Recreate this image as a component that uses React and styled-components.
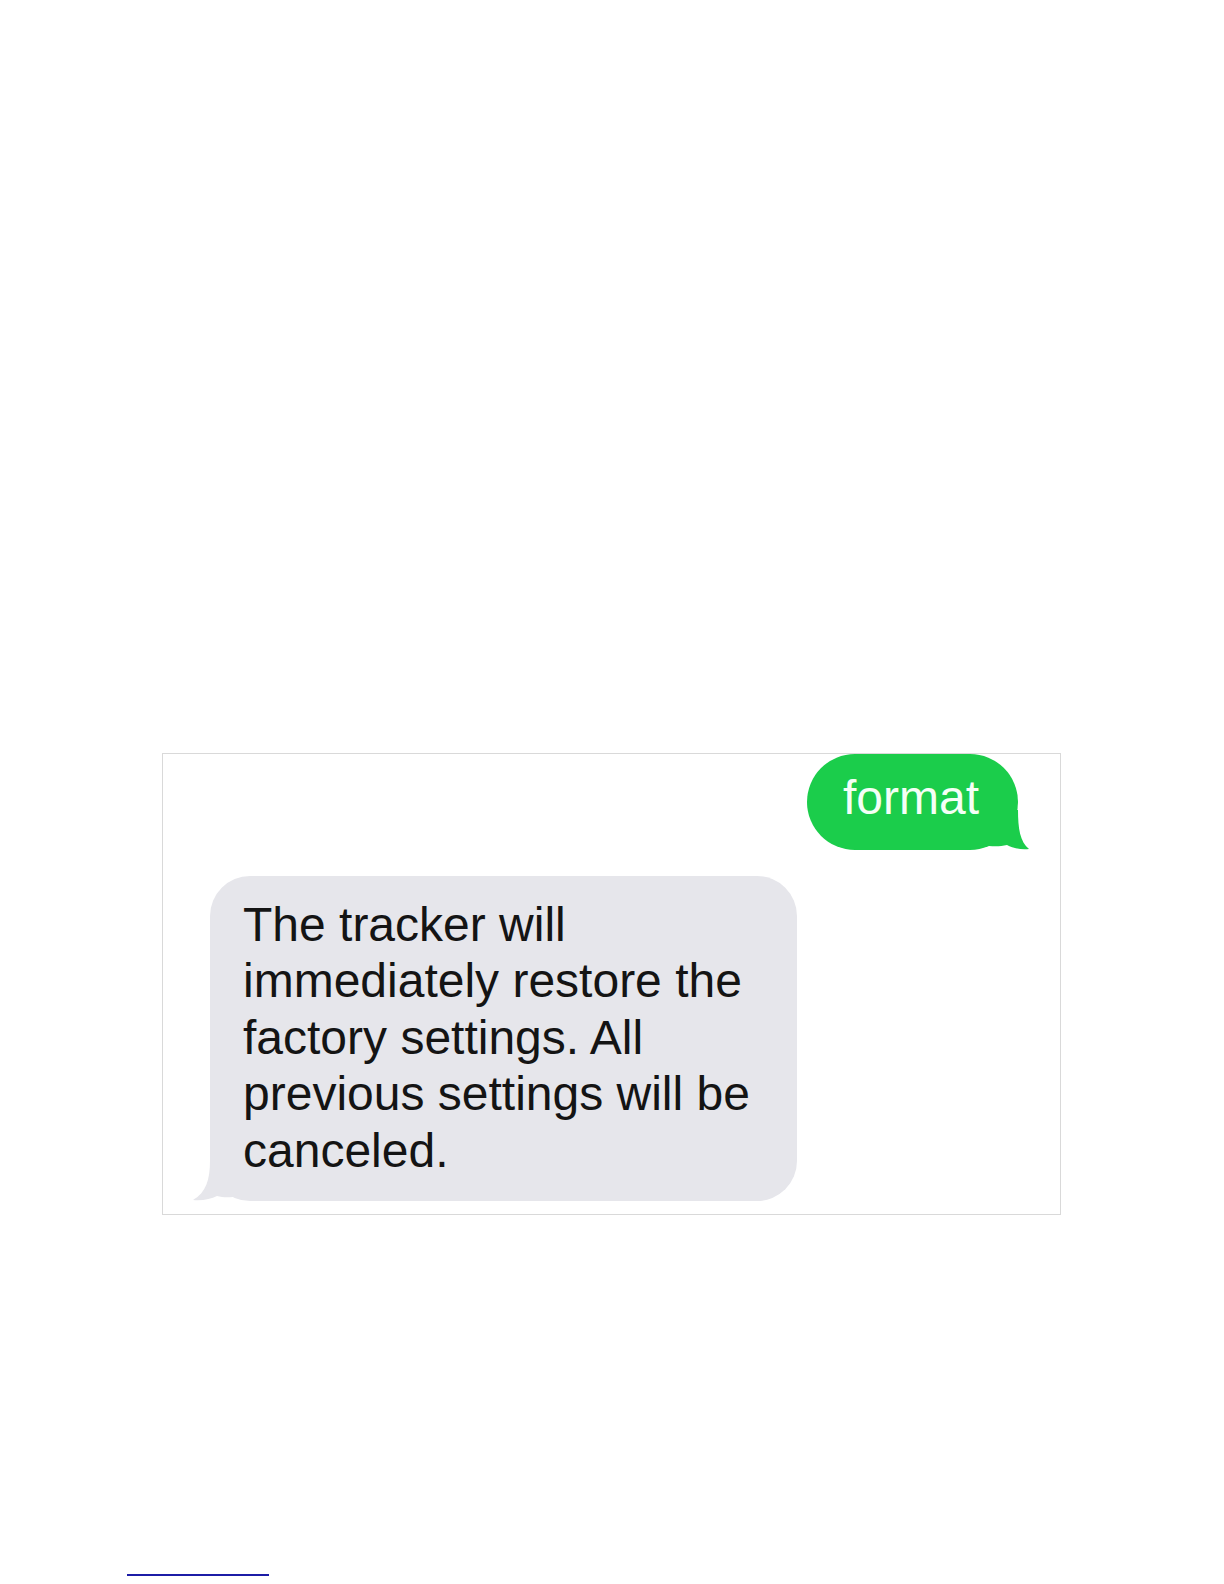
import React from "react";
import styled, { createGlobalStyle } from "styled-components";

const GlobalStyle = createGlobalStyle`
  body {
    margin: 0;
    background: #ffffff;
    font-family: "Liberation Sans", Arial, sans-serif;
  }
`;

const Page = styled.div`
  display: flex;
  flex-direction: column;
  width: 1224px;
  min-height: 1584px;
  padding-top: 753px;
  box-sizing: border-box;
`;

const Frame = styled.div`
  display: flex;
  flex-direction: column;
  margin-left: 162px;
  width: 899px;
  border: 1px solid #d9d9d9;
  box-sizing: border-box;
  padding-bottom: 13px;
`;

const Row = styled.div`
  display: flex;
  justify-content: ${({ $out }) => ($out ? "flex-end" : "flex-start")};
  padding: ${({ $out }) => ($out ? "0 42px 0 0" : "0 0 0 47px")};
  margin-top: ${({ $gap }) => $gap || 0}px;
`;

const Bubble = styled.div`
  position: relative;
  box-sizing: border-box;
  font-size: 48px;
  line-height: 56.4px;
  ${({ $out }) =>
    $out
      ? `
    background: #1bcd4b;
    color: #f4fff6;
    height: 96px;
    border-radius: 48px;
    padding: 16px 39px 0 36px;
  `
      : `
    background: #e6e6eb;
    color: #141414;
    width: 587px;
    border-radius: 40px;
    padding: 21px 30px 22px 33px;
  `}
`;

const Tail = styled.svg`
  position: absolute;
  bottom: 0;
  width: 40px;
  height: 40px;
  ${({ $out }) =>
    $out ? "right: -11px;" : "left: -17px; transform: scaleX(-1);"}
`;

const Footnote = styled.div`
  margin-top: 359px;
  margin-left: 127px;
  width: 142px;
  height: 2px;
  background: #1c1ca6;
`;

// bubble edge sits at x=29 (out) / x=23 (in) inside the 40px box
const BubbleTail = ({ out, color }) => (
  <Tail $out={out} viewBox="0 0 40 40">
    <path
      d={
        out
          ? "M0 0 L29 0 C29 18 31 32 40 39 C32 40 24 38 18 35 C12 36.5 6 36.5 0 36 Z"
          : "M0 0 L23 0 C23 18 27 32 40 39 C31 40 22 38 16 35 C11 36.5 5 36.5 0 36 Z"
      }
      fill={color}
    />
  </Tail>
);

export default function App() {
  return (
    <>
      <GlobalStyle />
      <Page>
        <Frame>
          <Row $out>
            <Bubble $out>
              format
              <BubbleTail out color="#1bcd4b" />
            </Bubble>
          </Row>
          <Row $gap={26}>
            <Bubble>
              The tracker will immediately restore the factory settings. All
              previous settings will be canceled.
              <BubbleTail color="#e6e6eb" />
            </Bubble>
          </Row>
        </Frame>
        <Footnote />
      </Page>
    </>
  );
}
